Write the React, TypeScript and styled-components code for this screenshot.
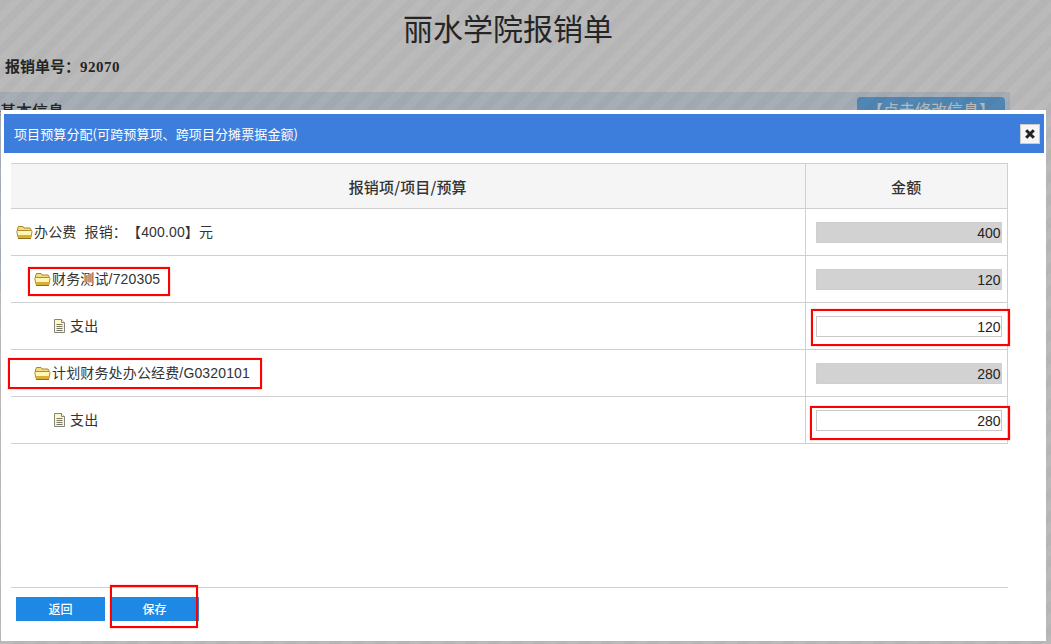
import React from "react";
import styled, { createGlobalStyle } from "styled-components";

const Global = createGlobalStyle`
  html, body { margin: 0; padding: 0; height: 100%; background: #fff; }
  body {
    font-family: "Liberation Sans", "Noto Sans CJK SC", sans-serif;
    color: #333;
    overflow: hidden;
    text-spacing-trim: space-all;
  }
`;

const Page = styled.div`
  position: relative;
  height: 644px;
  overflow: hidden;
  background: #fff;
`;

const Heading = styled.h1`
  margin: 0;
  padding: 7px 35px 3px 0;
  height: 40px;
  text-align: center;
  font: 400 30px/40px "Noto Sans CJK SC", serif;
  color: #333;
`;

const BillNo = styled.div`
  margin-top: 6px;
  padding-left: 5px;
  height: 20px;
  font: 700 15px/20px "Noto Sans CJK SC", serif;
  color: #333;
`;

const BillDigits = styled.span`
  font-family: "Liberation Serif", serif;
  letter-spacing: 0.5px;
`;

const SectionBar = styled.div`
  margin-top: 16px;
  width: 1010px;
  height: 200px;
  background: #e3edf7;
  display: flex;
  justify-content: space-between;
  align-items: flex-start;
  padding: 5px 5px 0 0;
  box-sizing: border-box;
`;

const SectionTitle = styled.span`
  font: 500 16px/22px "Noto Sans CJK SC", sans-serif;
  color: #333;
  margin-top: 2px;
`;

const EditButton = styled.span`
  width: 148px;
  height: 30px;
  padding-top: 1px;
  border-radius: 4px;
  background: #6db8f5;
  color: #fff;
  text-align: center;
  font: 400 16px/22px "Noto Sans CJK SC", sans-serif;
`;

const Mask = styled.div`
  position: absolute;
  inset: 0;
  background: repeating-linear-gradient(
    135deg,
    rgba(0, 0, 0, 0.29) 0,
    rgba(0, 0, 0, 0.29) 8px,
    rgba(0, 0, 0, 0.27) 8px,
    rgba(0, 0, 0, 0.27) 16px
  );
`;

const Dialog = styled.section`
  position: absolute;
  left: 1px;
  top: 110px;
  width: 1045px;
  height: 531px;
  box-sizing: border-box;
  padding: 4px 2px 0 3px;
  background: #fff;
  display: flex;
  flex-direction: column;
`;

const TitleBar = styled.header`
  flex: none;
  height: 39px;
  padding: 0 4px 0 10px;
  background: #3d7edd;
  display: flex;
  align-items: center;
  justify-content: space-between;
`;

const TitleText = styled.span`
  color: #fff;
  letter-spacing: 0.1px;
  font: 400 13px/20px "Noto Sans CJK SC", sans-serif;
`;

const CloseButton = styled.button`
  width: 20px;
  height: 20px;
  padding: 0;
  border: 1px solid #ccc;
  background: #f5f5f5;
  display: flex;
  align-items: center;
  justify-content: center;
`;

const Body = styled.div`
  flex: 1;
  padding: 10px 36px 0 7px;
  display: flex;
  flex-direction: column;
`;

const Table = styled.table`
  width: 997px;
  border-collapse: collapse;
  table-layout: fixed;
  font: 400 14px/20px "Liberation Sans", "Noto Sans CJK SC", sans-serif;
  color: #333;
`;

const HeadCell = styled.th`
  height: 45px;
  padding: 2px 0 0;
  box-sizing: border-box;
  background: #f5f5f5;
  border-top: 1px solid #d0d0d0;
  border-bottom: 1px solid #d0d0d0;
  letter-spacing: 0.15px;
  font: 500 15px/20px "Noto Sans CJK SC", sans-serif;
  text-align: center;
  &:first-child { width: 794px; }
  &:last-child { border-left: 1px solid #d0d0d0; border-right: 1px solid #d0d0d0; }
`;

const Cell = styled.td`
  height: 46px;
  padding: 0;
  border-bottom: 1px solid #d0d0d0;
  &:last-child { border-left: 1px solid #d0d0d0; border-right: 1px solid #d0d0d0; }
`;

const Tree = styled.div<{ $level: number }>`
  display: flex;
  align-items: center;
  gap: 1px;
  padding-left: ${(p) => [5, 23, 41][p.$level]}px;
`;

const Label = styled.span`
  white-space: pre;
  letter-spacing: 0.15px;
`;

const Amount = styled.input<{ $locked?: boolean }>`
  display: block;
  box-sizing: border-box;
  width: 186px;
  height: 21px;
  margin-left: 10px;
  padding: 2px 0 0;
  border: 1px solid ${(p) => (p.$locked ? "#cfcfcf" : "#c8c8c8")};
  outline: none;
  border-radius: 0;
  background: ${(p) => (p.$locked ? "#d2d2d2" : "#fff")};
  color: #222;
  text-align: right;
  font: 400 14px "Liberation Sans", sans-serif;
`;

const Footer = styled.footer`
  margin-top: 143px;
  width: 997px;
  box-sizing: border-box;
  border-top: 1px solid #d0d0d0;
  padding: 9px 0 0 5px;
  display: flex;
  gap: 5px;
`;

const Button = styled.button`
  width: 89px;
  height: 24px;
  padding: 0;
  border: none;
  background: #1e88e5;
  color: #fff;
  font: 500 12px/24px "Noto Sans CJK SC", sans-serif;
`;

const Callout = styled.div<{ $x: number; $y: number; $w: number; $h: number }>`
  position: absolute;
  left: ${(p) => p.$x}px;
  top: ${(p) => p.$y}px;
  width: ${(p) => p.$w}px;
  height: ${(p) => p.$h}px;
  box-sizing: border-box;
  border: 2px solid #f00;
  box-shadow: 0 0 1px rgba(255, 0, 0, 0.6);
  pointer-events: none;
`;

const Folder = () => (
  <svg width="17" height="14" viewBox="0 0 17 14" aria-hidden="true">
    <path d="M1.5 4 L2.5 1.5 H7 L8 3 H14 L15 4.5 V6 H1.5 Z" fill="#f4dc80" stroke="#a5852a" strokeWidth="1" />
    <path d="M1 5.5 H15.5 L16 6.5 L15 12.5 H2 L0.8 6.5 Z" fill="#fff6bd" stroke="#b08e2a" strokeWidth="1" />
    <path d="M1.6 10 H15.6 L15 13 H2.1 Z" fill="#d9ae33" />
    <path d="M2 13.5 H15" stroke="#8f7220" strokeWidth="1" />
  </svg>
);

const Doc = () => (
  <svg width="17" height="14" viewBox="0 0 17 14" aria-hidden="true">
    <path d="M2.5 0.5 H9.5 L12.5 3.5 V13.5 H2.5 Z" fill="#fff8c4" stroke="#85857a" strokeWidth="1" />
    <path d="M9.5 0.5 V3.5 H12.5" fill="#fff" stroke="#85857a" strokeWidth="1" />
    <path d="M4.5 5.5 H10.5 M4.5 7.5 H10.5 M4.5 9.5 H10.5 M4.5 11.5 H10.5" stroke="#77766a" strokeWidth="1" />
  </svg>
);

const CloseIcon = () => (
  <svg width="12" height="12" viewBox="0 0 12 12" aria-hidden="true">
    <path d="M2.2 2.2 L9.8 9.8 M9.8 2.2 L2.2 9.8" stroke="#222" strokeWidth="3" />
  </svg>
);

type Row = { level: number; icon: "folder" | "doc"; label: string; value: string; locked: boolean };

const rows: Row[] = [
  { level: 0, icon: "folder", label: "办公费  报销：【400.00】元", value: "400", locked: true },
  { level: 1, icon: "folder", label: "财务测试/720305", value: "120", locked: true },
  { level: 2, icon: "doc", label: "支出", value: "120", locked: false },
  { level: 1, icon: "folder", label: "计划财务处办公经费/G0320101", value: "280", locked: true },
  { level: 2, icon: "doc", label: "支出", value: "280", locked: false },
];

const callouts = [
  { x: 28, y: 267, w: 142, h: 29 },
  { x: 8, y: 358, w: 254, h: 31 },
  { x: 811, y: 309, w: 199, h: 37 },
  { x: 810, y: 406, w: 200, h: 34 },
  { x: 110, y: 585, w: 88, h: 43 },
];

export default function App() {
  return (
    <Page>
      <Global />
      <Heading>丽水学院报销单</Heading>
      <BillNo>
        报销单号：<BillDigits>92070</BillDigits>
      </BillNo>
      <SectionBar>
        <SectionTitle>基本信息</SectionTitle>
        <EditButton>【点击修改信息】</EditButton>
      </SectionBar>
      <Mask />
      <Dialog>
        <TitleBar>
          <TitleText>项目预算分配(可跨预算项、跨项目分摊票据金额)</TitleText>
          <CloseButton aria-label="关闭">
            <CloseIcon />
          </CloseButton>
        </TitleBar>
        <Body>
          <Table>
            <thead>
              <tr>
                <HeadCell>报销项/项目/预算</HeadCell>
                <HeadCell>金额</HeadCell>
              </tr>
            </thead>
            <tbody>
              {rows.map((r, i) => (
                <tr key={i}>
                  <Cell>
                    <Tree $level={r.level}>
                      {r.icon === "folder" ? <Folder /> : <Doc />}
                      <Label>{r.label}</Label>
                    </Tree>
                  </Cell>
                  <Cell>
                    <Amount $locked={r.locked} value={r.value} readOnly />
                  </Cell>
                </tr>
              ))}
            </tbody>
          </Table>
          <Footer>
            <Button>返回</Button>
            <Button>保存</Button>
          </Footer>
        </Body>
      </Dialog>
      {callouts.map((c, i) => (
        <Callout key={i} $x={c.x} $y={c.y} $w={c.w} $h={c.h} />
      ))}
    </Page>
  );
}
